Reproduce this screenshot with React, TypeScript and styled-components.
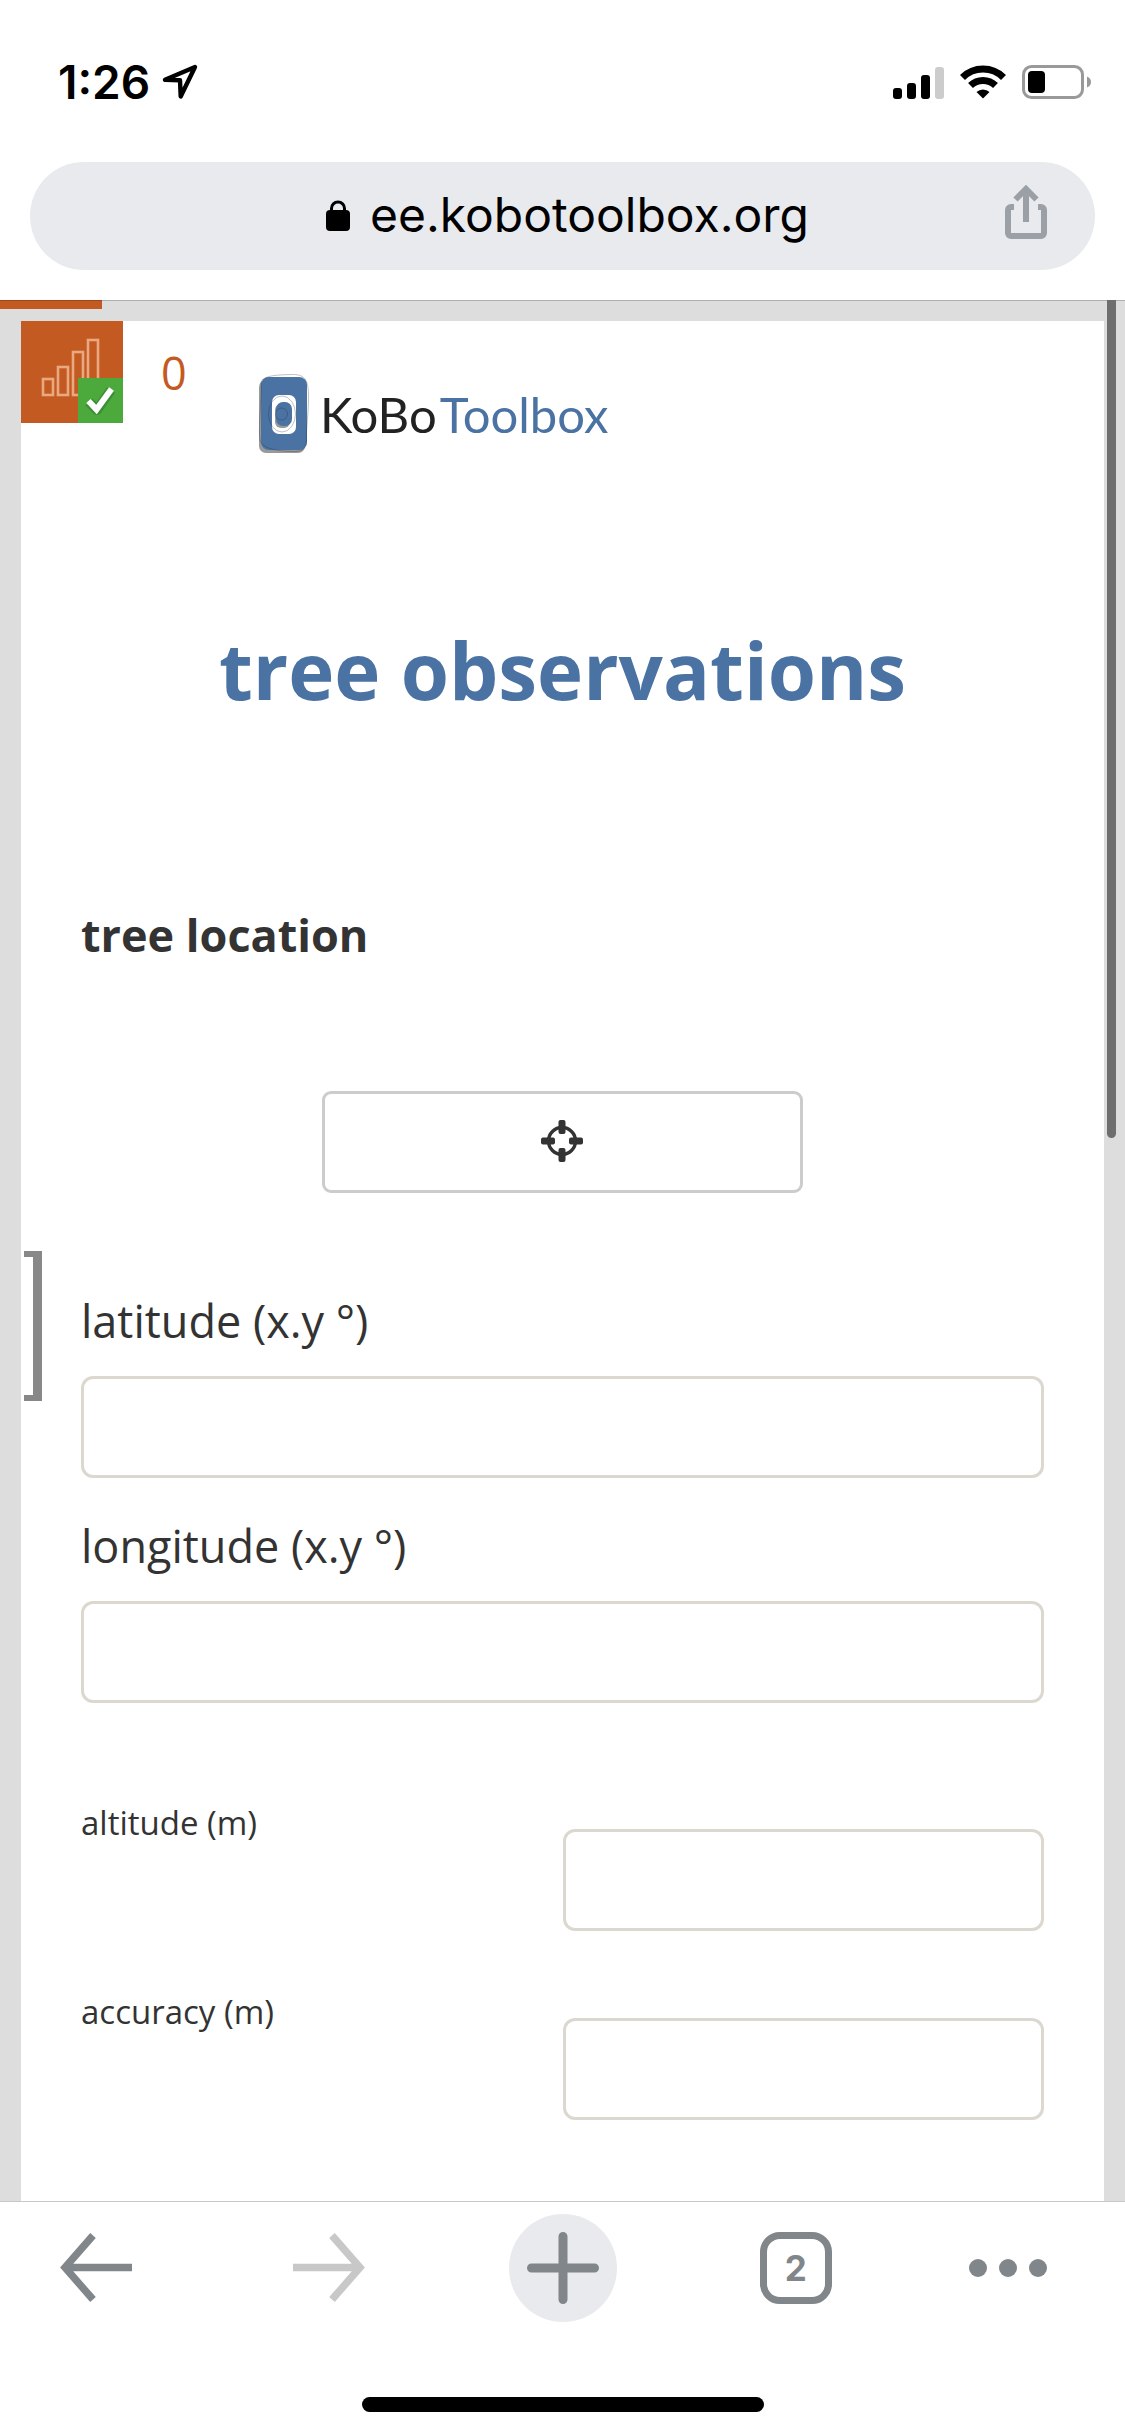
import React from 'react';
import styled, { createGlobalStyle } from 'styled-components';

const GlobalStyle = createGlobalStyle`
  *, *::before, *::after { box-sizing: border-box; }
  body { margin: 0; background: #fff; }
  button, input { font: inherit; }
`;

const Screen = styled.div`
  display: flex;
  flex-direction: column;
  min-height: 100vh;
  background: #fff;
  color: #333;
  font-family: 'Open Sans', 'Noto Sans', sans-serif;
`;

const StatusBar = styled.header`
  display: flex;
  justify-content: space-between;
  align-items: center;
  height: 162px;
  padding: 2px 33px 0 58px;
  color: #000;
  font: 600 46px/54px Inter, sans-serif;
`;

const StatusGroup = styled.div<{ $gap: number }>`
  display: flex;
  align-items: center;
  gap: ${(p) => p.$gap}px;
`;

const AddressRow = styled.div`
  padding: 0 30px 30px;
`;

const AddressBar = styled.div`
  display: grid;
  grid-template-columns: 90px 1fr 90px;
  align-items: center;
  height: 108px;
  border-radius: 54px;
  background: #e8eaed;
`;

const Address = styled.a`
  grid-column: 2;
  display: flex;
  justify-content: center;
  align-items: center;
  gap: 20px;
  padding: 0 0 2px 10px;
  color: #000;
  font: 400 48px/60px Inter, sans-serif;
  text-decoration: none;
`;

const IconButton = styled.button`
  display: flex;
  justify-content: center;
  align-items: center;
  width: 108px;
  height: 108px;
  flex: none;
  padding: 0;
  border: 0;
  border-radius: 50%;
  background: transparent;
  color: #80868a;
`;

const ShareButton = styled(IconButton)`
  width: 42px;
  padding-bottom: 8px;
  border-radius: 0;
  color: #9aa0a6;
`;

const NewTabButton = styled(IconButton)`
  background: #e8eaed;
`;

const ForwardButton = styled(IconButton)`
  color: #c8c8c8;
`;

const Viewport = styled.main`
  position: relative;
  display: flex;
  flex-direction: column;
  flex: 1;
  padding: 20px 21px 0;
  border-top: 1px solid #b0b0b0;
  background: #ddd;
`;

const Progress = styled.div`
  position: absolute;
  top: -1px;
  left: 0;
  width: 102px;
  height: 9px;
  border-top: 1px solid #9c481b;
  background: #c35a22;
`;

const ScrollThumb = styled.div`
  position: absolute;
  top: -1px;
  right: 9px;
  width: 9px;
  height: 838px;
  border-radius: 0 0 5px 5px;
  background: #6e6e6e;
`;

const Paper = styled.div`
  flex: 1;
  background: #fff;
`;

const FormHeader = styled.div`
  display: flex;
  align-items: flex-start;
  height: 222px;
`;

const QueueBadge = styled.div`
  flex: none;
  width: 102px;
  height: 102px;
  background: #c35a22;
`;

const QueueCount = styled.span`
  width: 103px;
  padding: 22px 0 0 38px;
  color: #c35a22;
  font-size: 45px;
  font-weight: 400;
  line-height: 60px;
`;

const Logo = styled.div`
  display: flex;
  align-items: center;
  gap: 10px;
  padding-top: 53px;
  padding-left: 32px;
`;

const LogoText = styled.span<{ $color: string }>`
  color: ${(p) => p.$color};
`;

const Wordmark = styled.div`
  display: flex;
  gap: 3px;
  font: 400 49px/80px Lato, sans-serif;
`;

const FormBody = styled.form`
  padding: 0 60px 81px;
`;

const Title = styled.h1`
  margin: 0;
  padding-top: 73px;
  color: #4a73a3;
  font-size: 78px;
  font-weight: 700;
  line-height: 108px;
  text-align: center;
`;

const QuestionTitle = styled.h2`
  margin: 181px 0 0;
  font-size: 45px;
  font-weight: 700;
  line-height: 60px;
`;

const DetectButton = styled.button`
  display: flex;
  justify-content: center;
  align-items: center;
  width: 50%;
  height: 102px;
  margin: 126px auto 0;
  padding: 0 2px 2px 0;
  border: 3px solid #ccc;
  border-radius: 9px;
  background: #fff;
  color: #333;
`;

const Fields = styled.div`
  position: relative;
  margin-top: 98px;
`;

const Bracket = styled.div`
  position: absolute;
  top: -40px;
  left: -57px;
  width: 18px;
  height: 150px;
  border: solid #888;
  border-width: 6px 9px 6px 0;
`;

const Field = styled.div`
  margin-bottom: 38px;
`;

const FieldLabel = styled.label`
  display: block;
  padding-bottom: 25px;
  font-size: 45px;
  line-height: 60px;
`;

const TextInput = styled.input`
  display: block;
  width: 100%;
  height: 102px;
  padding: 0 24px;
  border: 3px solid #ddd8cf;
  border-radius: 12px;
  background: #fff;
  color: #333;
  font-size: 45px;
  outline: none;
`;

const SideField = styled.div`
  display: grid;
  grid-template-columns: 1fr 1fr;
  align-items: start;
  margin-top: 87px;
`;

const SideFields = styled.div`
  padding-top: 1px;
`;

const SideLabel = styled.label`
  margin-top: -30px;
  font-size: 33px;
  line-height: 48px;
`;

const Toolbar = styled.nav`
  display: flex;
  justify-content: space-between;
  align-items: flex-start;
  height: 196px;
  padding: 12px 42px 0;
  border-top: 1px solid #c8c8c8;
  background: #fff;
`;

const TabsCount = styled.span`
  display: flex;
  justify-content: center;
  align-items: center;
  width: 72px;
  height: 72px;
  border: 7px solid #80868a;
  border-radius: 20px;
  font: 700 35px/42px Inter, sans-serif;
`;

const HomeIndicator = styled.div`
  width: 402px;
  height: 15px;
  margin: 0 auto 24px;
  border-radius: 8px;
  background: #000;
`;

const DotsIcon = styled.svg`
  flex: none;
`;

const LocationArrow = () => (
  <svg width="36" height="36" viewBox="0 0 36 36" fill="none" stroke="currentColor" strokeWidth="4.4" strokeLinejoin="round">
    <path d="M33 3 3 15.800 18 16.200 18.700 32.500Z" />
  </svg>
);

const Signal = () => (
  <svg width="51" height="33" viewBox="0 0 51 33">
    <rect y="22" width="9" height="11" rx="3" />
    <rect x="14" y="17" width="9" height="16" rx="3" />
    <rect x="28" y="9" width="9" height="24" rx="3" />
    <rect x="42" y="1" width="9" height="32" rx="3" fill="#ccc" />
  </svg>
);

const Wifi = () => (
  <svg width="46" height="34" viewBox="0 0 46 34">
    <g fill="none" stroke="#000" strokeWidth="7">
      <path d="M2.500 12.500A29 29 0 0 1 43.500 12.500" />
      <path d="M10.500 20.500A18 18 0 0 1 35.500 20.500" />
    </g>
    <path d="M16.500 27A9.500 9.500 0 0 1 29.500 27L23 33.500Z" />
  </svg>
);

const Battery = () => (
  <svg width="70" height="34" viewBox="0 0 70 34">
    <rect x="1.500" y="1.500" width="59" height="31" rx="8" fill="none" stroke="#999" strokeWidth="3" />
    <rect x="6" y="6" width="17" height="22" rx="4" />
    <path d="M65 11.500Q69 13 69 17T65 22.500Z" fill="#999" />
  </svg>
);

const Lock = () => (
  <svg width="24" height="31" viewBox="0 0 24 31">
    <path d="M5.500 12V8.500a6.500 6.500 0 0 1 13 0V12" fill="none" stroke="#000" strokeWidth="3" />
    <rect y="10" width="24" height="21" rx="4" />
  </svg>
);

const Share = () => (
  <svg width="42" height="54" viewBox="0 0 42 54" fill="none" stroke="currentColor" strokeWidth="6">
    <path d="M9 22H6a3 3 0 0 0-3 3V48a3 3 0 0 0 3 3H36a3 3 0 0 0 3-3V25a3 3 0 0 0-3-3H33" />
    <path d="M21 37V5M10.500 14.500 21 4 31.500 14.500" />
  </svg>
);

const QueueIcon = () => (
  <svg width="102" height="102" viewBox="0 0 102 102">
    <g fill="none" stroke="#e9a880" strokeWidth="2.600">
      <rect x="22" y="58" width="10" height="16" />
      <rect x="37" y="46" width="10" height="28" />
      <rect x="52" y="31" width="10" height="43" />
      <rect x="67" y="19" width="10" height="55" />
    </g>
    <rect x="57" y="57" width="45" height="45" fill="#4caa3c" />
    <path d="m68 81 8 8 14-20" fill="none" stroke="#347c2c" strokeWidth="10" strokeLinejoin="round" opacity=".6" />
    <path d="m67.500 80 8 8.500 15-20.500" fill="none" stroke="#fff" strokeWidth="6" />
  </svg>
);

const LogoMark = () => (
  <svg width="52" height="80" viewBox="0 0 52 80">
    <rect x="1" y="6" width="46" height="73" rx="7" fill="#999" />
    <rect x="3" y="3" width="46" height="73" rx="8" fill="#4a73a3" />
    <rect x="14" y="21" width="24" height="39" rx="7" fill="#fff" />
    <rect x="17" y="30" width="15" height="24" rx="6" fill="#999" />
    <rect x="18" y="28" width="16" height="24" rx="7" fill="#4a73a3" />
    <g fill="none" stroke="#223" strokeWidth=".7" opacity=".4">
      <path d="M3 8C6 1 20 1 33 .500S50 5 50.500 20 48 55 48.500 65 44 78 34 77.500 4 76 2 66 4 20 3 8Z" />
      <ellipse cx="24" cy="40" rx="13.500" ry="18" />
      <circle cx="23.500" cy="40" r="6" />
    </g>
  </svg>
);

const Crosshair = () => (
  <svg width="42" height="42" viewBox="0 0 42 42" fill="currentColor">
    <circle cx="21" cy="21" r="13.500" fill="none" stroke="currentColor" strokeWidth="3.400" />
    <rect x="17.500" width="7" height="14" rx="2" />
    <rect x="17.500" y="28" width="7" height="14" rx="2" />
    <rect y="17.500" width="14" height="7" rx="2" />
    <rect x="28" y="17.500" width="14" height="7" rx="2" />
  </svg>
);

const Arrow = ({ forward = false }: { forward?: boolean }) => (
  <svg width="72" height="72" viewBox="0 0 72 72" fill="none" stroke="currentColor" strokeWidth="7.400">
    <path d={forward ? 'M0 35.500H66M39 3.500 67 35.500 39 67.500' : 'M72 35.500H6M33 3.500 5 35.500 33 67.500'} />
  </svg>
);

const Plus = () => (
  <svg width="72" height="72" viewBox="0 0 72 72" fill="none" stroke="currentColor" strokeWidth="9" strokeLinecap="round">
    <path d="M36 4.500V67.500M4.500 36H67.500" />
  </svg>
);

const Dots = () => (
  <DotsIcon width="120" height="18" viewBox="0 0 120 18" fill="currentColor">
    <circle cx="9" cy="9" r="9" />
    <circle cx="39" cy="9" r="9" />
    <circle cx="69" cy="9" r="9" />
  </DotsIcon>
);

export default function App() {
  return (
    <Screen>
      <GlobalStyle />
      <StatusBar>
        <StatusGroup $gap={12}>
          <span>1:26</span>
          <LocationArrow />
        </StatusGroup>
        <StatusGroup $gap={16}>
          <Signal />
          <Wifi />
          <Battery />
        </StatusGroup>
      </StatusBar>
      <AddressRow>
        <AddressBar>
          <Address href="#">
            <Lock />
            ee.kobotoolbox.org
          </Address>
          <ShareButton type="button" aria-label="Share">
            <Share />
          </ShareButton>
        </AddressBar>
      </AddressRow>
      <Viewport>
        <Progress />
        <ScrollThumb />
        <Paper>
          <FormHeader>
            <QueueBadge>
              <QueueIcon />
            </QueueBadge>
            <QueueCount>0</QueueCount>
            <Logo>
              <LogoMark />
              <Wordmark>
                <LogoText $color="#222">KoBo</LogoText>
                <LogoText $color="#4a73a3">Toolbox</LogoText>
              </Wordmark>
            </Logo>
          </FormHeader>
          <FormBody>
            <Title>tree observations</Title>
            <QuestionTitle>tree location</QuestionTitle>
            <DetectButton type="button" aria-label="Detect current location">
              <Crosshair />
            </DetectButton>
            <Fields>
              <Bracket />
              <Field>
                <FieldLabel htmlFor="latitude">latitude (x.y °)</FieldLabel>
                <TextInput id="latitude" inputMode="decimal" />
              </Field>
              <Field>
                <FieldLabel htmlFor="longitude">longitude (x.y °)</FieldLabel>
                <TextInput id="longitude" inputMode="decimal" />
              </Field>
              <SideFields>
                <SideField>
                  <SideLabel htmlFor="altitude">altitude (m)</SideLabel>
                  <TextInput id="altitude" inputMode="decimal" />
                </SideField>
                <SideField>
                  <SideLabel htmlFor="accuracy">accuracy (m)</SideLabel>
                  <TextInput id="accuracy" inputMode="decimal" />
                </SideField>
              </SideFields>
            </Fields>
          </FormBody>
        </Paper>
      </Viewport>
      <Toolbar>
        <IconButton type="button" aria-label="Back">
          <Arrow />
        </IconButton>
        <ForwardButton type="button" aria-label="Forward">
          <Arrow forward />
        </ForwardButton>
        <NewTabButton type="button" aria-label="New tab">
          <Plus />
        </NewTabButton>
        <IconButton type="button">
          <TabsCount>2</TabsCount>
        </IconButton>
        <IconButton type="button" aria-label="More">
          <Dots />
        </IconButton>
      </Toolbar>
      <HomeIndicator />
    </Screen>
  );
}
